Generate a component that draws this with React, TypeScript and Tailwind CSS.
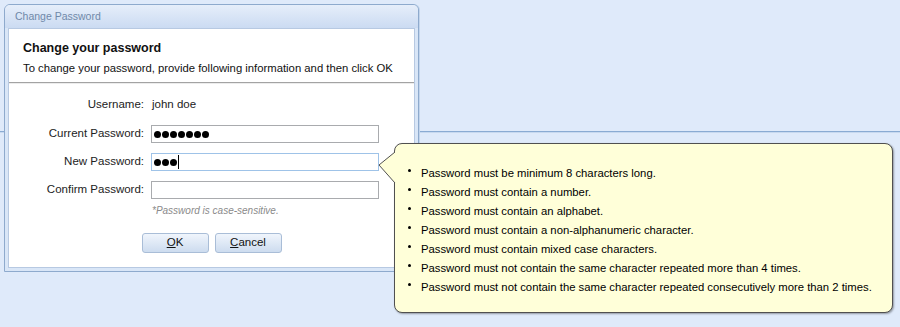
import React from "react";

const rules = [
  "Password must be minimum 8 characters long.",
  "Password must contain a number.",
  "Password must contain an alphabet.",
  "Password must contain a non-alphanumeric character.",
  "Password must contain mixed case characters.",
  "Password must not contain the same character repeated more than 4 times.",
  "Password must not contain the same character repeated consecutively more than 2 times.",
];

function Dots({ n }: { n: number }) {
  return (
    <div className="flex items-center gap-[1px]">
      {Array.from({ length: n }).map((_, i) => (
        <span key={i} className="block w-[7px] h-[7px] rounded-full bg-black" />
      ))}
    </div>
  );
}

function Field({
  label,
  children,
  focused,
}: {
  label: string;
  children?: React.ReactNode;
  focused?: boolean;
}) {
  return (
    <div className="flex items-center h-[18px]">
      <div className="w-[135px] text-right text-[11.5px] text-[#222]">{label}</div>
      <div
        className={
          "ml-[7px] w-[228px] h-[18px] bg-white border flex items-center pl-[2px] " +
          (focused ? "border-[#9fc3e8]" : "border-[#a9abae]")
        }
      >
        {children}
      </div>
    </div>
  );
}

export default function App() {
  return (
    <div
      className="relative w-[900px] h-[327px] overflow-hidden bg-[#dfeafa]"
      style={{ fontFamily: '"Liberation Sans", Arial, sans-serif' }}
    >
      {/* background page line */}
      <div className="h-[131px]" />
      <div className="h-px bg-[#8aabd3]" />
      <div className="h-px bg-[#c8d9ef]" />

      {/* dialog */}
      <div className="absolute left-[4px] top-[4px] w-[415px] h-[268px] flex flex-col border border-[#8eaacd] rounded-t-[6px] bg-[#d9e6f7] px-[3px] pb-[3px] shadow-[1px_0_0_#c3d5ec]">
        <div className="h-[23px] flex items-center text-[10.5px] text-[#7089a9] bg-gradient-to-b from-[#e6eefa] to-[#cbdbf2] rounded-t-[5px] -mx-[3px] pl-[10px] pt-[1px]">
          Change Password
        </div>
        <div className="flex-1 bg-white border border-[#b7c9e2] flex flex-col">
          <div className="pl-[14px] pt-[11px]">
            <div className="text-[12.5px] font-bold text-[#111] leading-[16px]">
              Change your password
            </div>
            <div className="mt-[4px] text-[11.3px] text-[#111] leading-[16px]">
              To change your password, provide following information and then click OK
            </div>
          </div>
          <div className="mt-[6px] h-px bg-[#a3a3a3]" />
          <div className="h-px bg-[#ececec]" />
          <div className="pt-[12px] flex flex-col gap-[10px]">
            <div className="flex items-center h-[18px] mb-[1px]">
              <div className="w-[135px] text-right text-[11.5px] text-[#222]">Username:</div>
              <div className="ml-[8px] text-[11.5px] text-[#222]">john doe</div>
            </div>
            <Field label="Current Password:">
              <Dots n={7} />
            </Field>
            <Field label="New Password:" focused>
              <Dots n={3} />
              <span className="block w-px h-[14px] bg-black ml-[1px]" />
            </Field>
            <Field label="Confirm Password:" />
          </div>
          <div className="ml-[143px] mt-[5px] text-[10px] italic text-[#8a8a8a] leading-[14px]">
            *Password is case-sensitive.
          </div>
          <div className="mt-[15px] flex justify-center gap-[6px]">
            <button className="w-[67px] h-[20px] rounded-[3px] border border-[#a9bdd7] bg-gradient-to-b from-[#f0f5fc] to-[#cddcef] text-[11.5px] text-[#111]">
              <span className="underline">O</span>K
            </button>
            <button className="w-[67px] h-[20px] rounded-[3px] border border-[#a9bdd7] bg-gradient-to-b from-[#f0f5fc] to-[#cddcef] text-[11.5px] text-[#111]">
              <span className="underline">C</span>ancel
            </button>
          </div>
        </div>
      </div>

      {/* callout */}
      <div className="absolute left-[394px] top-[143px] w-[499px] h-[170px] rounded-[8px] border border-[#505050] bg-[#ffffd9] shadow-[1px_1px_2px_rgba(0,0,0,0.35)] pl-[13px] pt-[20px]">
        <ul className="flex flex-col">
          {rules.map((r) => (
            <li key={r} className="flex items-start h-[19px] leading-[19px] text-[11.3px] text-black">
              <span className="block w-[3px] h-[3px] rounded-full bg-black mt-[5px] mr-[10px]" />
              <span>{r}</span>
            </li>
          ))}
        </ul>
      </div>
      <svg
        className="absolute left-[378px] top-[150px]"
        width="19"
        height="36"
        viewBox="0 0 19 36"
      >
        <polygon points="18,1 1,15 18,34" fill="#ffffd9" />
        <polyline points="17,2 1,15 17,33" fill="none" stroke="#505050" strokeWidth="1" />
      </svg>
    </div>
  );
}
